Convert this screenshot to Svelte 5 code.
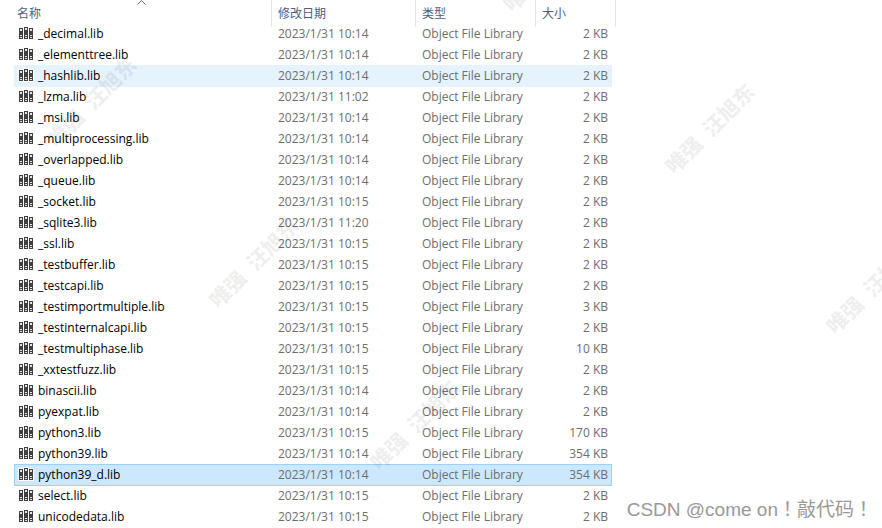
<script>
    const files = [
        ["_decimal.lib", "10:14", 2],
        ["_elementtree.lib", "10:14", 2],
        ["_hashlib.lib", "10:14", 2],
        ["_lzma.lib", "11:02", 2],
        ["_msi.lib", "10:14", 2],
        ["_multiprocessing.lib", "10:14", 2],
        ["_overlapped.lib", "10:14", 2],
        ["_queue.lib", "10:14", 2],
        ["_socket.lib", "10:15", 2],
        ["_sqlite3.lib", "11:20", 2],
        ["_ssl.lib", "10:15", 2],
        ["_testbuffer.lib", "10:15", 2],
        ["_testcapi.lib", "10:15", 2],
        ["_testimportmultiple.lib", "10:15", 3],
        ["_testinternalcapi.lib", "10:15", 2],
        ["_testmultiphase.lib", "10:15", 10],
        ["_xxtestfuzz.lib", "10:15", 2],
        ["binascii.lib", "10:14", 2],
        ["pyexpat.lib", "10:14", 2],
        ["python3.lib", "10:15", 170],
        ["python39.lib", "10:14", 354],
        ["python39_d.lib", "10:14", 354],
        ["select.lib", "10:15", 2],
        ["unicodedata.lib", "10:15", 2]
    ];

    const columns = ["名称", "修改日期", "类型", "大小"];

    // centre points of the repeated watermark
    const marks = [
        [91, 101], [253, 262], [414, 424], [547, -34],
        [709, 128], [870, 288], [-42, 566]
    ];

    let hovered = "_hashlib.lib";
    let selected = "python39_d.lib";
</script>

<main>
    <table>
        <colgroup>
            <col class="name-col">
            <col class="date-col">
            <col class="type-col">
            <col class="size-col">
        </colgroup>
        <thead>
            <tr>
                {#each columns as column, i}
                    <th scope="col" aria-sort={i === 0 ? "ascending" : undefined}>
                        <button type="button">{column}</button>
                        {#if i === 0}
                            <svg class="sort" width="9" height="5" viewBox="0 0 9 5" aria-hidden="true">
                                <path d="M0.5 4.5L4.5 0.5L8.5 4.5" fill="none" stroke="#666" />
                            </svg>
                        {/if}
                    </th>
                {/each}
            </tr>
        </thead>
        <tbody>
            {#each files as [name, time, size]}
                <tr
                    class:hovered={name === hovered}
                    class:selected={name === selected}
                    on:mouseenter={() => hovered = name}
                    on:click={() => selected = name}
                >
                    <td class="name">
                        <div class="file">
                            <svg width="16" height="16" viewBox="0 0 16 16" shape-rendering="crispEdges" aria-hidden="true">
                                <path d="M0 1H5V0H11V1H16V14H0Z" fill="#fff" />
                                <path d="M1 2H5V13H1ZM6 1H10V13H6ZM11 2H15V13H11Z" fill="#404040" />
                                <path d="M2 3H4V5H2ZM7 2H9V4H7ZM12 3H14V5H12Z" fill="#e4e4e4" />
                                <path d="M2 9H4V10H2ZM7 9H9V10H7ZM12 9H14V10H12ZM2 11H4V12H2ZM7 11H9V12H7ZM12 11H14V12H12Z" fill="#e4e4e4" />
                            </svg>
                            <span>{name}</span>
                        </div>
                    </td>
                    <td>2023/1/31 {time}</td>
                    <td>Object File Library</td>
                    <td class="size">{size} KB</td>
                </tr>
            {/each}
        </tbody>
    </table>

    <div class="marks" aria-hidden="true">
        {#each marks as [x, y]}
            <span class="mark" style="left: {x}px; top: {y}px">唯强 <span class="second">汪旭东</span></span>
        {/each}
    </div>

    <p class="credit">CSDN @come on！敲代码！</p>
</main>

<style>
    :global(body) {
        margin: 0;
        background: #fff;
    }

    main {
        position: relative;
        height: 100vh;
        overflow: hidden;
        padding-left: 14px;
        box-sizing: border-box;
        font-family: "Open Sans", "Noto Sans CJK SC", sans-serif;
        font-size: 12px;
        color: #6d6d6d;
    }

    table {
        width: 598px;
        table-layout: fixed;
        border-spacing: 0;
        line-height: 20px;
    }

    .name-col {
        width: 258px;
    }

    .date-col {
        width: 144px;
    }

    .type-col {
        width: 120px;
    }

    .size-col {
        width: 76px;
    }

    th {
        position: relative;
        height: 23px;
        padding: 0;
        text-align: left;
    }

    th::after {
        content: "";
        position: absolute;
        top: 0;
        right: 0;
        width: 1px;
        height: 27px;
        background: #e5e5e5;
    }

    th:last-child::after {
        right: -4px;
    }

    th button {
        display: block;
        width: 100%;
        padding: 4px 0 0 6px;
        border: 0;
        background: none;
        font: inherit;
        font-weight: 400;
        line-height: 19px;
        text-align: left;
        color: #4c607a;
    }

    th:first-child button {
        padding-left: 3px;
    }

    .sort {
        position: absolute;
        top: 0;
        left: 123px;
    }

    td {
        height: 21px;
        padding: 0 0 0 6px;
        white-space: nowrap;
    }

    .name {
        padding-left: 4px;
        color: #000;
    }

    .file {
        display: flex;
        align-items: center;
        gap: 4px;
    }

    .size {
        padding-right: 4px;
        text-align: right;
    }

    .hovered {
        background: #e5f3ff;
        box-shadow: 0 1px #e5f3ff;
    }

    .selected {
        background: #cce8ff;
        box-shadow: inset 1px 1px #99d1ff, inset -1px 0 #99d1ff, 0 1px #99d1ff;
    }

    .marks {
        position: absolute;
        inset: 0;
        pointer-events: none;
    }

    .mark {
        position: absolute;
        transform: translate(-50%, -50%) rotate(-45deg);
        font-family: "Noto Sans CJK SC", sans-serif;
        font-size: 21px;
        font-weight: 900;
        line-height: 24px;
        white-space: nowrap;
        color: rgba(0, 0, 0, 0.08);
    }

    .second {
        margin-left: 6px;
    }

    .credit {
        position: absolute;
        right: 9px;
        bottom: 4px;
        margin: 0;
        font-family: "Liberation Sans", "Noto Sans CJK TC", sans-serif;
        font-size: 19px;
        font-weight: 400;
        line-height: 28px;
        color: #999;
    }
</style>
